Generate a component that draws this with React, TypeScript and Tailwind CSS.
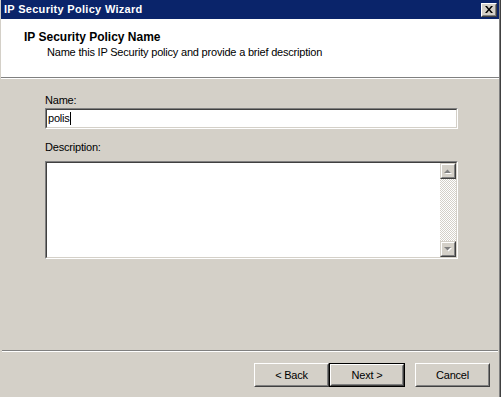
import React from "react";

function Arrow({ up }: { up?: boolean }) {
  return (
    <svg width="8" height="5" viewBox="0 0 8 5" className="block">
      {up ? (
        <>
          <polygon points="1,5 8,5 4.5,1.5" fill="#ffffff" />
          <polygon points="0,4 7,4 3.5,0.5" fill="#808080" />
        </>
      ) : (
        <>
          <polygon points="1,1 8,1 4.5,4.5" fill="#ffffff" />
          <polygon points="0,0 7,0 3.5,3.5" fill="#808080" />
        </>
      )}
    </svg>
  );
}

function ScrollBtn({ up }: { up?: boolean }) {
  return (
    <div className="w-[16px] h-[16px] bg-[#d4d0c8] border border-t-[#d4d0c8] border-l-[#d4d0c8] border-b-[#404040] border-r-[#404040]">
      <div className="w-full h-full border border-t-white border-l-white border-b-[#808080] border-r-[#808080] flex items-center justify-center">
        <Arrow up={up} />
      </div>
    </div>
  );
}

function Btn({ label, def }: { label: string; def?: boolean }) {
  const inner = (
    <div className="h-full w-full border border-t-white border-l-white border-b-[#404040] border-r-[#404040]">
      <div className="h-full w-full border border-t-[#d4d0c8] border-l-[#d4d0c8] border-b-[#808080] border-r-[#808080] flex items-center justify-center">
        {label}
      </div>
    </div>
  );
  if (def) {
    return <div className="w-[76px] h-[24px] border border-black bg-[#d4d0c8]">{inner}</div>;
  }
  return <div className="w-[75px] h-[24px] bg-[#d4d0c8]">{inner}</div>;
}

export default function App() {
  return (
    <div className="w-[501px] h-[397px] border-r border-[#404040] font-['Liberation_Sans',Arial,sans-serif] text-[11px] leading-[13px] tracking-[-0.2px] text-black overflow-hidden">
      <div className="h-full border-r border-[#808080] border-l border-l-[#d4d0c8] bg-[#d4d0c8] flex flex-col">
        {/* title bar */}
        <div className="h-[19px] bg-[#0a246a] flex items-center justify-between pl-[3px] pr-[2px]">
          <span className="text-white font-bold tracking-[0.3px]">IP Security Policy Wizard</span>
          <div className="w-[16px] h-[14px] border border-t-white border-l-white border-b-[#404040] border-r-[#404040] bg-[#d4d0c8]">
            <div className="w-full h-full border border-t-[#d4d0c8] border-l-[#d4d0c8] border-b-[#808080] border-r-[#808080] flex items-center justify-center">
              <svg width="8" height="7" viewBox="0 0 8 7">
                <path d="M0 0h2l2 2.5L6 0h2L5 3.5 8 7H6L4 4.5 2 7H0l3-3.5z" fill="#000" />
              </svg>
            </div>
          </div>
        </div>
        {/* header */}
        <div className="h-[59px] bg-white border-b border-[#808080] pt-[12px] pl-[23px]">
          <div className="font-bold text-[12px] tracking-[0px]">IP Security Policy Name</div>
          <div className="mt-[2px] pl-[23px]">Name this IP Security policy and provide a brief description</div>
        </div>
        <div className="h-px bg-white" />
        {/* body */}
        <div className="flex-1 pl-[44px] pt-[15px]">
          <div>Name:</div>
          <div className="mt-[1px] w-[413px] h-[21px] border border-t-[#808080] border-l-[#808080] border-b-white border-r-white">
            <div className="w-full h-full bg-white border border-t-[#404040] border-l-[#404040] border-b-[#d4d0c8] border-r-[#d4d0c8] flex items-center pl-[1px]">
              <span>polis</span>
              <span className="inline-block w-px h-[13px] bg-black" />
            </div>
          </div>
          <div className="mt-[12px]">Description:</div>
          <div className="mt-[7px] w-[413px] h-[98px] border border-t-[#808080] border-l-[#808080] border-b-white border-r-white">
            <div className="w-full h-full bg-white border border-t-[#404040] border-l-[#404040] border-b-[#d4d0c8] border-r-[#d4d0c8] flex justify-end">
              <div className="w-[16px] h-full flex flex-col">
                <ScrollBtn up />
                <div className="flex-1 bg-[repeating-conic-gradient(#d4d0c8_0_25%,#ffffff_0_50%)] bg-[length:2px_2px]" />
                <ScrollBtn />
              </div>
            </div>
          </div>
        </div>
        {/* separator */}
        <div className="h-px bg-[#808080] ml-[1px] mr-[1px]" />
        <div className="h-px bg-white ml-[1px] mr-[1px]" />
        {/* buttons */}
        <div className="h-[45px] flex justify-end items-start pt-[11px] pr-[9px]">
          <Btn label="< Back" />
          <Btn label="Next >" def />
          <div className="w-[10px]" />
          <Btn label="Cancel" />
        </div>
      </div>
    </div>
  );
}
